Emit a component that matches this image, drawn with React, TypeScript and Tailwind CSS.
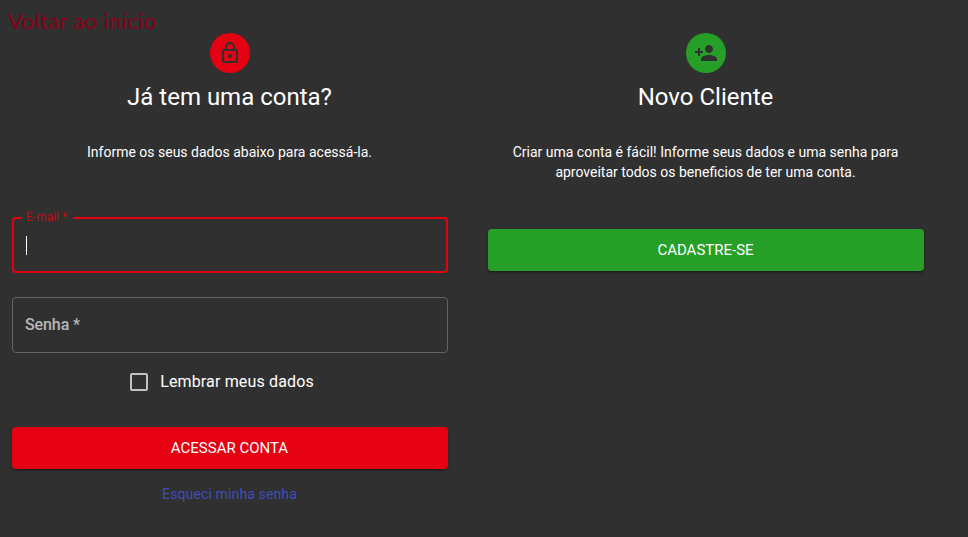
import React from "react";

function Badge({ color, path }: { color: string; path: string }) {
  return (
    <div className={`flex size-10 items-center justify-center rounded-full ${color}`}>
      <svg viewBox="0 0 24 24" className="size-6 fill-[#303030]">
        <path d={path} />
      </svg>
    </div>
  );
}

const lockPath =
  "M12 17c1.1 0 2-.9 2-2s-.9-2-2-2-2 .9-2 2 .9 2 2 2zm6-9h-1V6c0-2.76-2.24-5-5-5S7 3.24 7 6v2H6c-1.1 0-2 .9-2 2v10c0 1.1.9 2 2 2h12c1.1 0 2-.9 2-2V10c0-1.1-.9-2-2-2zM8.9 6c0-1.71 1.39-3.1 3.1-3.1s3.1 1.39 3.1 3.1v2H8.9V6zM18 20H6V10h12v10z";
const personAddPath =
  "M15 12c2.21 0 4-1.79 4-4s-1.79-4-4-4-4 1.79-4 4 1.79 4 4 4zm-9-2V7H4v3H1v2h3v3h2v-3h3v-2H6zm9 4c-2.67 0-8 1.34-8 4v2h16v-2c0-2.66-5.33-4-8-4z";

const buttonShadow =
  "shadow-[0px_3px_1px_-2px_rgba(0,0,0,0.2),0px_2px_2px_0px_rgba(0,0,0,0.14),0px_1px_5px_0px_rgba(0,0,0,0.12)]";

export default function App() {
  return (
    <div className="h-[537px] w-[968px] overflow-hidden bg-[#303030] font-['Roboto',sans-serif] text-white">
      <header className="flex h-[33px] items-start pl-2 pt-[7px]">
        <a className="whitespace-nowrap font-['Lato',sans-serif] text-[22px] leading-[27px] tracking-[0.35px] text-[#880018]">
          Voltar ao inicio
        </a>
      </header>
      <main className="flex gap-10 pl-3">
        <section className="flex w-[436px] flex-col items-center">
          <Badge color="bg-[#e50012]" path={lockPath} />
          <h1 className="mt-2 pr-px text-2xl leading-8">Já tem uma conta?</h1>
          <p className="mt-[29px] pr-px text-sm leading-5">Informe os seus dados abaixo para acessá-la.</p>
          <form className="mt-[55px] flex w-full flex-col items-center">
            <div className="relative flex h-14 w-full items-center rounded border-2 border-[#e50012] px-3">
              <label className="absolute -top-[9px] left-2 h-3 bg-[#303030] pl-1 pr-1.5 text-xs leading-[14px] text-[#c00a16]">
                E-mail&nbsp;*
              </label>
              <span className="h-[19px] w-px bg-white" />
            </div>
            <div className="mt-6 flex h-14 w-full items-center rounded border border-[#646464] px-3 text-base font-medium tracking-[-0.1px] text-[#b8b8b8]">
              Senha&nbsp;*
            </div>
            <label className="mt-2 flex h-[42px] items-center gap-3 pr-4 text-base tracking-[0.15px]">
              <span className="size-[18px] rounded-[2px] border-2 border-[#c1c1c1]" />
              Lembrar meus dados
            </label>
            <button
              type="button"
              className={`mt-6 h-[42px] w-full rounded bg-[#e50012] pr-px text-[15px] leading-[26px] ${buttonShadow}`}
            >
              ACESSAR CONTA
            </button>
            <a className="mt-[15px] pr-px text-sm leading-5 tracking-[0.13px] text-[#3f4db8]">Esqueci minha senha</a>
          </form>
        </section>
        <section className="flex w-[436px] flex-col items-center">
          <Badge color="bg-[#259f27]" path={personAddPath} />
          <h1 className="mt-2 pr-px text-2xl leading-8">Novo Cliente</h1>
          <p className="mt-[29px] w-[400px] pr-px text-center text-sm leading-5">
            Criar uma conta é fácil! Informe seus dados e uma senha para aproveitar todos os beneficios de ter uma
            conta.
          </p>
          <button
            type="button"
            className={`mt-[47px] h-[42px] w-full rounded bg-[#259f27] pr-px text-[15px] leading-[26px] ${buttonShadow}`}
          >
            CADASTRE-SE
          </button>
        </section>
      </main>
    </div>
  );
}
